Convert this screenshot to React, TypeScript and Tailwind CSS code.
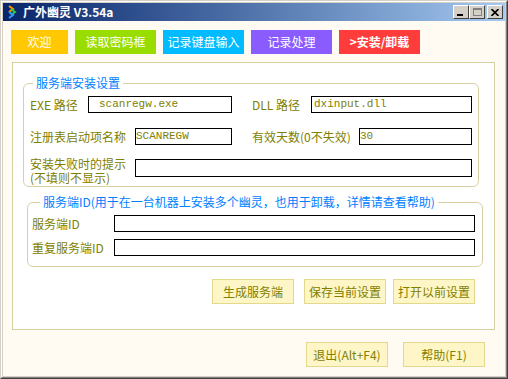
import React from "react";

const font = "font-['Noto_Sans_CJK_SC',sans-serif]";

function Field({ w, h = 17, text = "", pl = 2 }: { w: number; h?: number; text?: string; pl?: number }) {
  return (
    <div
      className="border border-black bg-white text-[#808000] font-['Liberation_Mono',monospace] text-[11px] leading-[15px] overflow-hidden whitespace-nowrap"
      style={{ width: w, height: h, paddingLeft: pl }}
    >
      {text}
    </div>
  );
}

function Btn({ children, className = "" }: { children: React.ReactNode; className?: string }) {
  return (
    <div
      className={
        "w-[82px] h-[25px] bg-[#fff6c8] border border-[#e3d98c] flex items-center justify-center text-[12px] text-[#808000] " +
        className
      }
    >
      {children}
    </div>
  );
}

function TitleBtn({ children, className = "" }: { children: React.ReactNode; className?: string }) {
  return (
    <div
      className={
        "w-[16px] h-[14px] bg-[#d4d0c8] border-t border-l border-t-white border-l-white border-r border-b border-r-[#404040] border-b-[#404040] flex items-center justify-center " +
        className
      }
    >
      {children}
    </div>
  );
}

export default function App() {
  return (
    <div className={"w-[508px] h-[379px] flex border-t border-l border-[#d4d0c8] border-r border-b border-r-[#404040] border-b-[#404040] " + font}>
      <div className="flex-1 flex border-t border-l border-white border-r border-b border-r-[#808080] border-b-[#808080]">
        <div className="flex-1 flex flex-col p-[1px] bg-[#d4d0c8]">
          {/* title bar */}
          <div className="h-[18px] flex items-center bg-gradient-to-r from-[#0a246a] to-[#a6caf0] pl-[5px] pr-[2px]">
            <svg width="10" height="14" viewBox="0 0 10 14" className="mr-[5px]">
              <path d="M1 1 L5 4 L1 7" stroke="#ff9900" strokeWidth="2" fill="none" />
              <path d="M3 4 L7 7 L3 10" stroke="#33cc33" strokeWidth="2" fill="none" />
              <path d="M1 7 L5 10 L1 13" stroke="#3399ff" strokeWidth="2" fill="none" />
            </svg>
            <span className="text-white font-bold text-[12px] leading-[14px]">广外幽灵 V3.54a</span>
            <div className="flex-1" />
            <TitleBtn>
              <div className="w-[6px] h-[2px] bg-black mt-[6px] -ml-[2px]" />
            </TitleBtn>
            <TitleBtn>
              <div className="w-[9px] h-[8px] border border-[#808080] border-t-2" />
            </TitleBtn>
            <TitleBtn className="ml-[2px]">
              <svg width="8" height="7" viewBox="0 0 8 7">
                <path d="M0.5 0 L7.5 7 M7.5 0 L0.5 7" stroke="black" strokeWidth="1.6" />
              </svg>
            </TitleBtn>
          </div>

          {/* body */}
          <div className="flex-1 bg-[#fffaf2] flex flex-col">
            <div className="flex gap-[7px] ml-[8px] mt-[9px] text-white text-[12px]">
              <div className="w-[57px] h-[24px] bg-[#ffc800] flex items-center justify-center">欢迎</div>
              <div className="w-[81px] h-[24px] bg-[#99dd00] flex items-center justify-center">读取密码框</div>
              <div className="w-[81px] h-[24px] bg-[#00bbff] flex items-center justify-center">记录键盘输入</div>
              <div className="w-[81px] h-[24px] bg-[#8a5cff] flex items-center justify-center">记录处理</div>
              <div className="w-[81px] h-[24px] bg-[#ff3c3c] flex items-center justify-center font-bold">&gt;安装/卸载</div>
            </div>

            <div className="ml-[9px] mt-[8px] w-[483px] h-[268px] border border-[#d8d0a4] bg-white flex flex-col">
              <fieldset className="ml-[10px] mt-[12px] w-[456px] border border-[#d8d0a4] rounded-[6px] pb-[9px] pl-[6px]">
                <legend className="ml-[3px] px-[3px] text-[12px] leading-[16px] text-[#0080ff]">服务端安装设置</legend>
                <div className="flex items-center mt-[5px] text-[12px] text-[#808000] leading-[14px]">
                  <div className="w-[58px]">EXE 路径</div>
                  <Field w={144} text="scanregw.exe" pl={10} />
                  <div className="w-[59px] ml-[20px]">DLL 路径</div>
                  <Field w={161} text="dxinput.dll" pl={2} />
                </div>
                <div className="flex items-center mt-[15px] text-[12px] text-[#808000] leading-[14px]">
                  <div className="w-[105px]">注册表启动项名称</div>
                  <Field w={97} text="SCANREGW" pl={0} />
                  <div className="w-[107px] ml-[20px] whitespace-nowrap">有效天数(0不失效)</div>
                  <Field w={113} text="30" pl={0} />
                </div>
                <div className="flex items-start mt-[14px] text-[12px] text-[#808000] leading-[14px] h-[18px]">
                  <div className="w-[105px] whitespace-nowrap -mt-[2px]">
                    <div>安装失败时的提示</div>
                    <div>(不填则不显示)</div>
                  </div>
                  <Field w={337} h={18} />
                </div>
              </fieldset>

              <fieldset className="ml-[14px] mt-[7px] w-[456px] border border-[#d8d0a4] rounded-[6px] pb-[10px] pl-[4px]">
                <legend className="ml-[8px] px-[3px] text-[12px] leading-[16px] text-[#0080ff] whitespace-nowrap">
                  服务端ID(用于在一台机器上安装多个幽灵，也用于卸载，详情请查看帮助)
                </legend>
                <div className="flex items-center mt-[5px] text-[12px] text-[#808000] leading-[14px]">
                  <div className="w-[82px]">服务端ID</div>
                  <Field w={361} />
                </div>
                <div className="flex items-center mt-[7px] text-[12px] text-[#808000] leading-[14px]">
                  <div className="w-[82px]">重复服务端ID</div>
                  <Field w={361} />
                </div>
              </fieldset>

              <div className="flex justify-end mt-[12px] pr-[19px]">
                <Btn className="mr-[10px]">生成服务端</Btn>
                <Btn className="mr-[7px]">保存当前设置</Btn>
                <Btn>打开以前设置</Btn>
              </div>
            </div>

            <div className="flex justify-end mt-[12px] pr-[20px] gap-[15px]">
              <Btn>退出(Alt+F4)</Btn>
              <Btn>帮助(F1)</Btn>
            </div>
          </div>
        </div>
      </div>
    </div>
  );
}
